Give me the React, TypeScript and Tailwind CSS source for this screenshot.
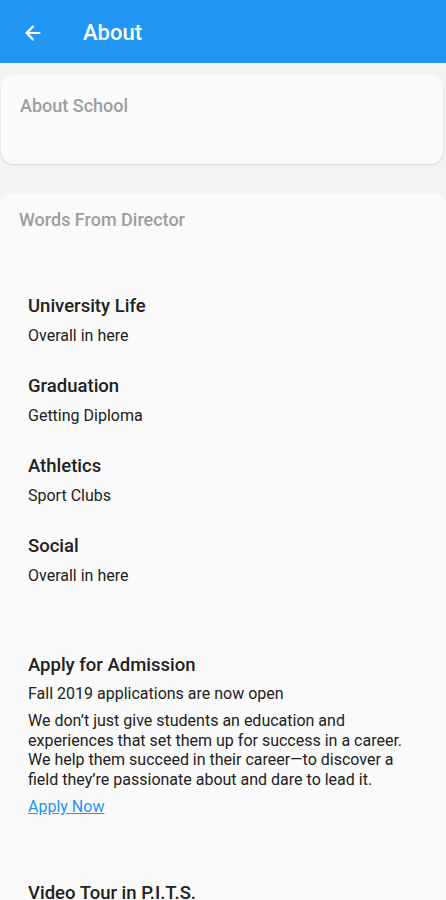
import { ArrowLeft } from 'lucide-react';

const topics = [
  { title: 'University Life', sub: 'Overall in here' },
  { title: 'Graduation', sub: 'Getting Diploma' },
  { title: 'Athletics', sub: 'Sport Clubs' },
  { title: 'Social', sub: 'Overall in here' },
];

function App() {
  return (
    <div className="min-h-screen w-full bg-[#fafafa] font-['Roboto',sans-serif] overflow-hidden">
      {/* App bar */}
      <div className="h-[63px] bg-[#2196f3] flex items-center pl-[22px] pt-[2px] shadow-[0_1px_2px_rgba(0,0,0,0.15)]">
        <ArrowLeft className="w-[22px] h-[22px] text-white" strokeWidth={2.4} />
        <h1 className="ml-[39px] text-[22px] font-medium text-white leading-none">About</h1>
      </div>

      <div className="bg-[#f2f3f3] pt-[12px]">
        {/* About School card */}
        <div className="ml-[1px] mr-[3px] h-[89px] rounded-xl bg-[#fafafa] shadow-[0_1px_2px_rgba(0,0,0,0.12)] pl-[19px] pt-[20px]">
          <p className="text-[18px] font-medium text-[#9e9e9e] leading-[22px]">About School</p>
        </div>

        {/* Words From Director card and page content */}
        <div className="mt-[29px] rounded-t-xl bg-[#fafafa] pt-[16px]">
          <p className="pl-[19px] text-[18px] font-medium text-[#9e9e9e] leading-[22px]">Words From Director</p>

          <div className="flex flex-col px-[28px] pt-[64px]">
            {topics.map((t) => (
              <div key={t.title} className="mb-[29px]">
                <p className="text-[18.5px] font-medium text-[#212121] leading-[22px]">{t.title}</p>
                <p className="mt-[9px] text-[16px] text-[#212121] leading-5">{t.sub}</p>
              </div>
            ))}

            <div className="mt-[39px]">
              <p className="text-[18.5px] font-medium text-[#212121] leading-[22px]">Apply for Admission</p>
              <p className="mt-[8px] text-[16px] text-[#212121] leading-5">Fall 2019 applications are now open</p>
              <p className="mt-[7px] text-[16px] text-[#212121] leading-[19.6px]">
                We don’t just give students an education and experiences that set them up for success in a career.
                We help them succeed in their career—to discover a field they’re passionate about and dare to lead it.
              </p>
              <a href="#" className="inline-block mt-[8px] text-[16px] text-[#2196f3] underline leading-5">
                Apply Now
              </a>
            </div>

            <p className="mt-[63px] text-[18.5px] font-medium text-[#212121] leading-[22px]">Video Tour in P.I.T.S.</p>
          </div>
        </div>
      </div>
    </div>
  );
}

export default App;
